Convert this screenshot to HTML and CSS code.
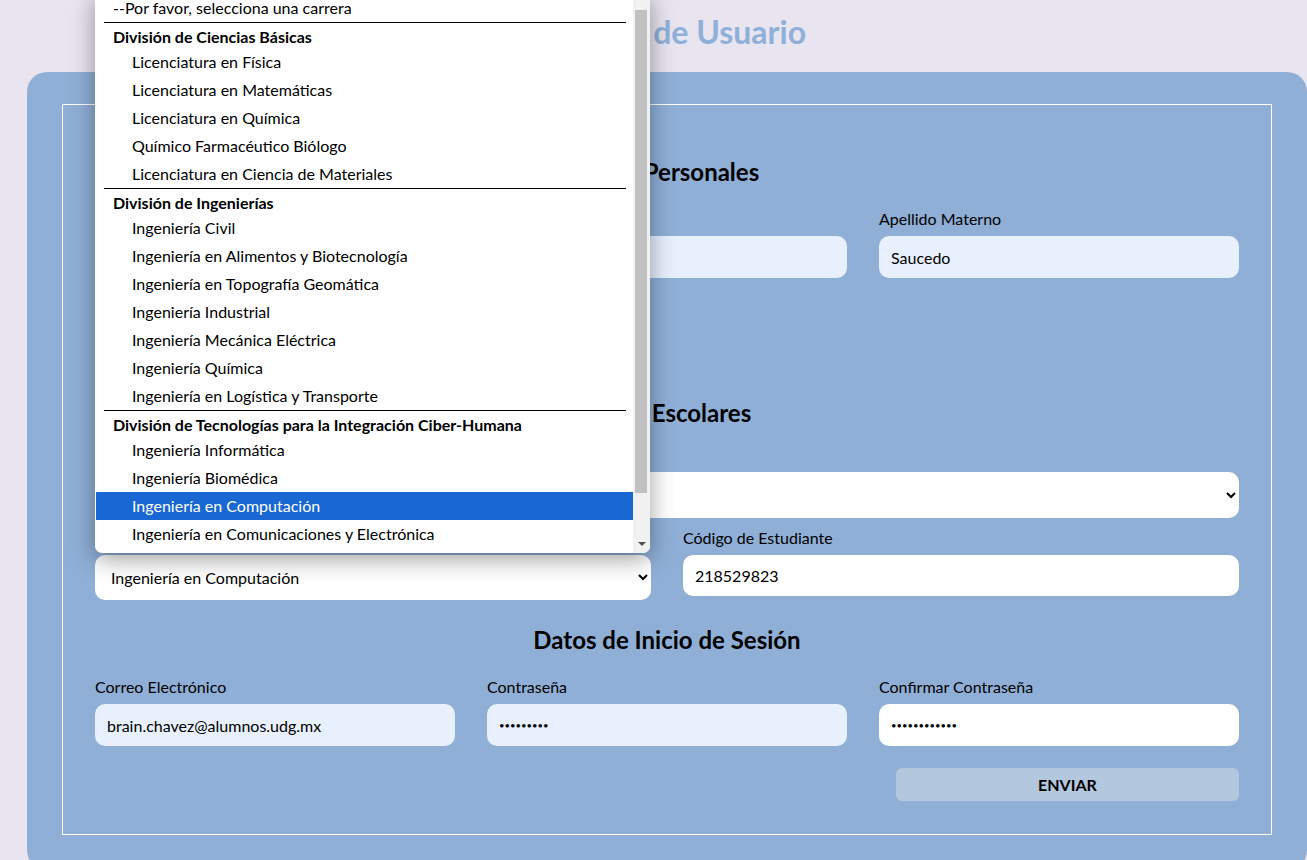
FILE: index.html
```html
<!DOCTYPE html>
<html lang="es">
<head>
<meta charset="utf-8">
<title>Registro de Usuario</title>
<link rel="stylesheet" href="styles.css">
</head>
<body>
<div class="page">
  <h1 class="title">Registro de Usuario</h1>
  <div class="card">
    <form class="frame">
      <h2 class="section-title">Datos Personales</h2>
      <div class="grid3 first-row">
        <div class="field"><label>Nombre(s)</label><input class="inp filled" type="text" value="Brain"></div>
        <div class="field"><label>Apellido Paterno</label><input class="inp filled" type="text" value="Chávez"></div>
        <div class="field"><label>Apellido Materno</label><input class="inp filled" type="text" value="Saucedo"></div>
      </div>
      <div class="grid3 next-row">
        <div class="field"><label>Fecha de Nacimiento</label><input class="inp filled" type="text" value="01/01/2000"></div>
      </div>

      <h2 class="section-title gap-section">Datos Escolares</h2>
      <div class="grid1 first-row-tight">
        <div class="field"><label>Centro Universitario</label>
          <select class="sel sel-tall"><option>CUCEI</option></select>
        </div>
      </div>
      <div class="grid2 next-row-small">
        <div class="field">
          <label>Carrera</label>
          <div class="select-wrap">
            <select class="sel sel-mid"><option>Ingeniería en Computación</option></select>
            <div class="popup">
              <div class="popup-list">
                <div class="opt opt-top">--Por favor, selecciona una carrera</div>
                <div class="sep"></div>
                <div class="grp">División de Ciencias Básicas</div>
                <div class="opt">Licenciatura en Física</div>
                <div class="opt">Licenciatura en Matemáticas</div>
                <div class="opt">Licenciatura en Química</div>
                <div class="opt">Químico Farmacéutico Biólogo</div>
                <div class="opt">Licenciatura en Ciencia de Materiales</div>
                <div class="sep"></div>
                <div class="grp">División de Ingenierías</div>
                <div class="opt">Ingeniería Civil</div>
                <div class="opt">Ingeniería en Alimentos y Biotecnología</div>
                <div class="opt">Ingeniería en Topografía Geomática</div>
                <div class="opt">Ingeniería Industrial</div>
                <div class="opt">Ingeniería Mecánica Eléctrica</div>
                <div class="opt">Ingeniería Química</div>
                <div class="opt">Ingeniería en Logística y Transporte</div>
                <div class="sep"></div>
                <div class="grp">División de Tecnologías para la Integración Ciber-Humana</div>
                <div class="opt">Ingeniería Informática</div>
                <div class="opt">Ingeniería Biomédica</div>
                <div class="opt opt-active">Ingeniería en Computación</div>
                <div class="opt">Ingeniería en Comunicaciones y Electrónica</div>
              </div>
              <div class="sb">
                <div class="sb-up"></div>
                <div class="sb-thumb"></div>
                <div class="sb-down"></div>
              </div>
            </div>
          </div>
        </div>
        <div class="field"><label>Código de Estudiante</label><input class="inp inp-short" type="text" value="218529823"></div>
      </div>

      <h2 class="section-title gap-section2">Datos de Inicio de Sesión</h2>
      <div class="grid3 first-row">
        <div class="field"><label>Correo Electrónico</label><input class="inp filled" type="text" value="brain.chavez@alumnos.udg.mx"></div>
        <div class="field"><label>Contraseña</label><input class="inp filled pwd" type="password" value="123456789"></div>
        <div class="field"><label>Confirmar Contraseña</label><input class="inp pwd" type="password" value="123456789012"></div>
      </div>
      <div class="actions">
        <button type="button" class="btn">ENVIAR</button>
      </div>
    </form>
  </div>
</div>
</body>
</html>
```

FILE: styles.css
```css
* { box-sizing: border-box; }
html, body { margin: 0; height: 100%; overflow: hidden; }
body {
  background: #e8e4f0;
  font-family: "Lato", "Open Sans", sans-serif;
  color: #000;
}
.page { margin-left: 27px; width: 1280px; }
.title {
  margin: 0;
  padding-top: 14px;
  line-height: 36px;
  font-size: 32px;
  font-weight: 700;
  color: #8fb0d8;
  text-align: center;
}
.card {
  margin-top: 22px;
  background: #8fafd6;
  border-radius: 20px;
  padding: 32px 35px 35px;
}
.frame {
  border: 1px solid #ffffff;
  padding: 52px 32px 33px;
}
.section-title {
  margin: 0;
  font-size: 24px;
  line-height: 30px;
  font-weight: 700;
  text-align: center;
}
.gap-section { margin-top: 38px; }
.gap-section2 { margin-top: 25px; }
.grid1 { display: grid; grid-template-columns: 1fr; }
.grid2 { display: grid; grid-template-columns: 1fr 1fr; column-gap: 32px; align-items: start; }
.grid3 { display: grid; grid-template-columns: repeat(3, 1fr); column-gap: 32px; }
.first-row { margin-top: 23px; }
.first-row-tight { margin-top: 18px; }
.next-row { margin-top: 14px; }
.next-row-small { margin-top: 11px; }
.field label {
  display: block;
  font-size: 16px;
  line-height: 18px;
  margin-bottom: 8px;
}
.inp {
  display: block;
  width: 100%;
  height: 42px;
  border: none;
  border-radius: 10px;
  background: #ffffff;
  padding: 0 12px;
  font-family: inherit;
  font-size: 16px;
  color: #000;
  outline: none;
}
.pwd { font-size: 9.5px; letter-spacing: 0; }
.inp-short { height: 41px; }
.filled { background: #e8f0fe; }
.sel {
  display: block;
  width: 100%;
  border: none;
  border-radius: 10px;
  background: #ffffff;
  padding: 0 8px 0 12px;
  font-family: inherit;
  font-size: 16px;
  color: #000;
  outline: none;
}
.sel-tall { height: 46px; }
.sel-mid { height: 45px; }
.select-wrap { position: relative; }
.popup {
  position: absolute;
  left: 0;
  bottom: calc(100% + 2px);
  width: 555px;
  display: flex;
  background: #ffffff;
  border-radius: 0 0 7px 7px;
  box-shadow: 0 6px 24px rgba(0, 0, 0, 0.38);
  padding-bottom: 5px;
  overflow: hidden;
}
.popup-list { flex: 1; padding-left: 1px; }
.opt {
  height: 28px;
  line-height: 28px;
  padding-left: 36px;
  font-size: 16px;
  white-space: nowrap;
}
.opt-top { padding-left: 17px; }
.opt-active { background: #1967d2; color: #ffffff; }
.grp {
  height: 25px;
  line-height: 28px;
  padding-left: 17px;
  font-size: 16px;
  font-weight: 700;
  white-space: nowrap;
}
.sep {
  height: 1px;
  background: #000;
  margin: 0 7px 0 8px;
}
.sb {
  width: 17px;
  background: #f1f1f1;
  position: relative;
  margin-bottom: -5px;
}
.sb-up {
  position: absolute;
  top: 0;
  left: 5px;
  width: 0; height: 0;
  border-left: 4px solid transparent;
  border-right: 4px solid transparent;
  border-bottom: 4px solid #a3a3a3;
}
.sb-thumb {
  position: absolute;
  top: 16px;
  left: 2px;
  width: 12px;
  height: 483px;
  background: #c1c1c1;
}
.sb-down {
  position: absolute;
  bottom: 7px;
  left: 5px;
  width: 0; height: 0;
  border-left: 4px solid transparent;
  border-right: 4px solid transparent;
  border-top: 4px solid #505050;
}
.actions {
  display: flex;
  justify-content: flex-end;
  margin-top: 22px;
}
.btn {
  width: 343px;
  height: 33px;
  border: none;
  border-radius: 6px;
  background: #b3c7de;
  font-family: inherit;
  font-size: 16px;
  font-weight: 700;
  color: #000;
}
```
